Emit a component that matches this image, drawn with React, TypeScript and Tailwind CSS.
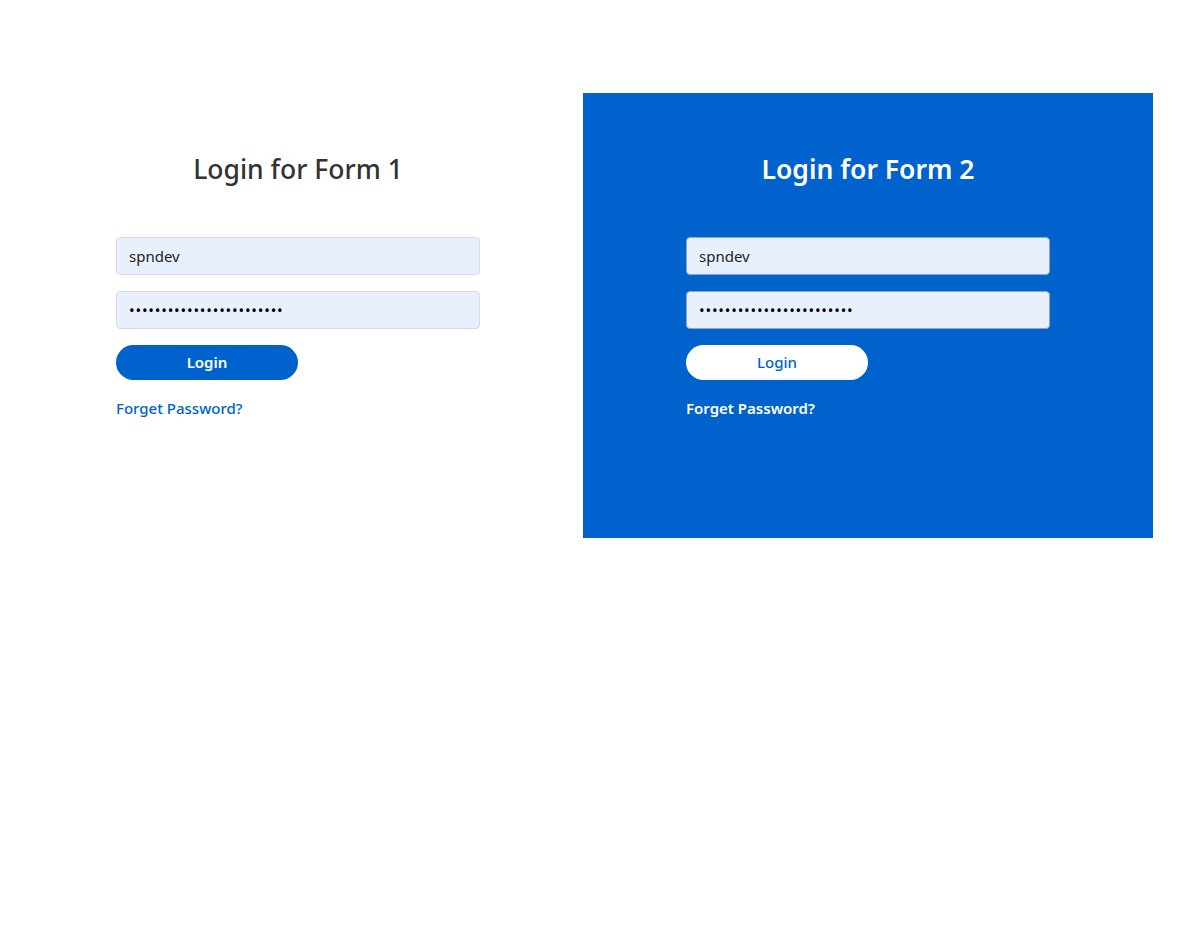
import React from 'react';

function LoginForm({ index, dark }: { index: number; dark?: boolean }) {
  return (
    <div
      className={`w-[570px] h-[445px] flex flex-col items-center ${
        dark ? 'bg-[#0062cc]' : 'bg-white'
      }`}
    >
      <h3
        className={`mt-[52px] text-[26.5px] leading-[48px] ${
          dark ? 'text-white font-semibold' : 'text-[#333333] font-medium'
        }`}
      >
        Login for Form {index}
      </h3>

      <form className="w-[364px] mt-[44px] flex flex-col" onSubmit={(e) => e.preventDefault()}>
        <input
          type="text"
          defaultValue="spndev"
          className={`h-[38px] w-full rounded-[4px] bg-[#e8f0fe] px-3 text-[15px] text-[#222] outline-none border ${
            dark ? 'border-[#8aa6c8]' : 'border-[#d6dce6]'
          }`}
        />
        <input
          type="password"
          defaultValue="spndevspndevspndevspndev"
          className={`mt-4 h-[38px] w-full rounded-[4px] bg-[#e8f0fe] px-3 text-[15px] text-black outline-none border tracking-[0.8px] ${
            dark ? 'border-[#8aa6c8]' : 'border-[#d6dce6]'
          }`}
        />
        <button
          type="submit"
          className={`mt-4 h-[35px] w-[182px] rounded-full text-[15px] ${
            dark ? 'bg-white text-[#0062cc] font-medium' : 'bg-[#0062cc] text-white font-semibold'
          }`}
        >
          Login
        </button>
        <a
          href="#"
          className={`mt-[17px] text-[15px] ${
            dark ? 'text-white font-semibold' : 'text-[#0062cc] font-medium'
          }`}
        >
          Forget Password?
        </a>
      </form>
    </div>
  );
}

export default function App() {
  return (
    <div className="min-h-[952px] bg-white font-['Noto_Sans','Open_Sans',sans-serif] pt-[93px] pl-[13px]">
      <div className="flex">
        <LoginForm index={1} />
        <LoginForm index={2} dark />
      </div>
    </div>
  );
}
